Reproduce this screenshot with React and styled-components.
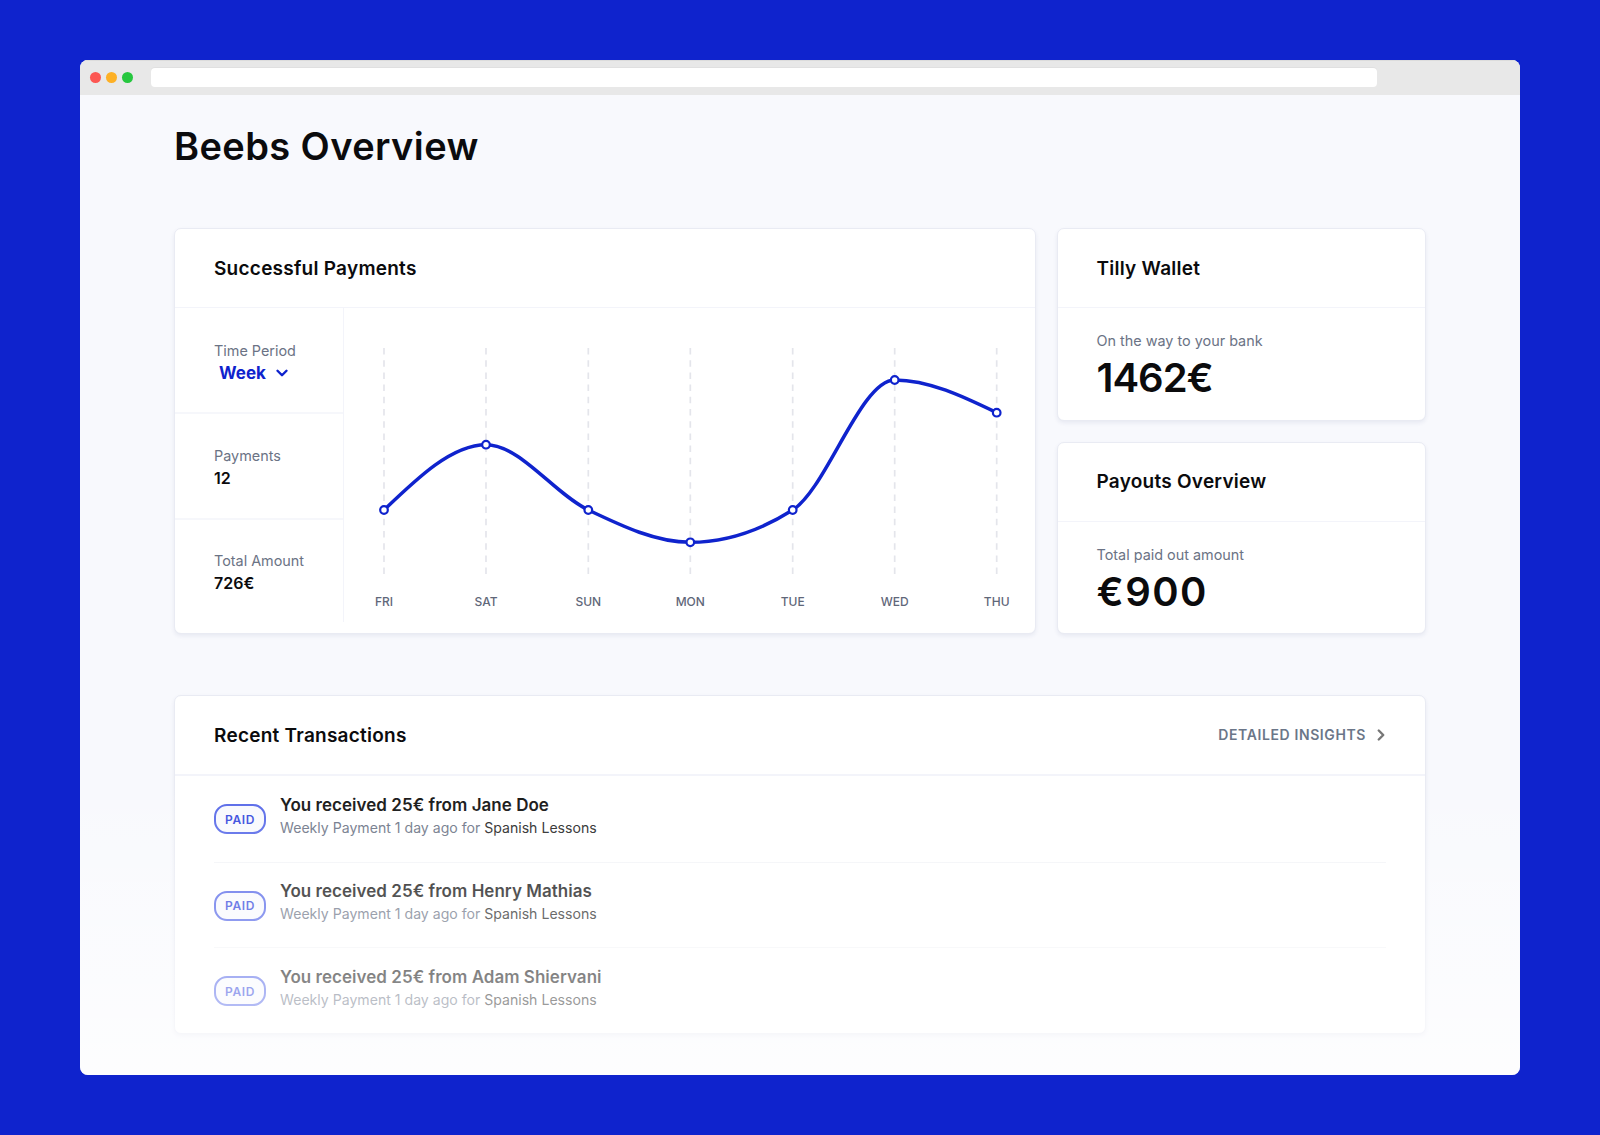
import React from "react";
import styled, { createGlobalStyle } from "styled-components";
import { ChevronDown, ChevronRight } from "lucide-react";

const BLUE = "#0f23cd";
const FONT = `Inter, "Liberation Sans", sans-serif`;

const Global = createGlobalStyle`
  html, body { margin: 0; padding: 0; }
  body { background: ${BLUE}; font-family: ${FONT}; color: #0b0b0d; }
  * { box-sizing: border-box; }
`;

const Page = styled.div`
  width: 1600px;
  height: 1135px;
  padding: 60px 80px;
`;
const Window = styled.div`
  position: relative;
  height: 1015px;
  background: #f8f9fd;
  border-radius: 8px;
  overflow: hidden;
`;
const Fade = styled.div`
  position: absolute;
  inset: 0;
  pointer-events: none;
  background: linear-gradient(to bottom, rgba(255,255,255,0) 0, rgba(255,255,255,0) 720px, rgba(255,255,255,0.72) 1015px);
`;
const Toolbar = styled.div`
  display: flex;
  align-items: center;
  height: 35px;
  padding: 0 0 2px 10px;
  background: #e8e8e8;
  border-top: 1px solid #dcdcdc;
`;
const Dot = styled.span`
  width: 11px;
  height: 11px;
  margin-right: 5px;
  border-radius: 50%;
  background: ${(p) => p.$c};
`;
const Address = styled.div`
  width: 1226px;
  height: 19px;
  margin-left: 13px;
  border-radius: 4px;
  background: #fff;
  box-shadow: 0 -1px 0 #e0e0e0;
`;
const Content = styled.main`
  padding: 26px 94px 0;
`;
const Title = styled.h1`
  margin: 0 0 57px;
  font-size: 38px;
  line-height: 50px;
  font-weight: 600;
  letter-spacing: 0.4px;
`;
const Top = styled.div`
  display: grid;
  grid-template-columns: 862px 369px;
  column-gap: 21px;
  height: 406px;
  margin-bottom: 61px;
`;
const Card = styled.section`
  background: #fff;
  border: 1px solid #e9ebf3;
  border-radius: 7px;
  box-shadow: 0 2px 4px rgba(40, 50, 110, 0.08);
`;
const Stack = styled.div`
  display: flex;
  flex-direction: column;
  gap: 21px;
`;
const SmallCard = styled(Card)`
  flex: 1;
`;
const CardHeader = styled.header`
  display: flex;
  align-items: center;
  justify-content: space-between;
  height: ${(p) => p.$h || 79}px;
  padding: 1px ${(p) => p.$px || 39}px 0;
  border-bottom: ${(p) => p.$bw || 1}px solid #f3f4fa;
`;
const CardTitle = styled.h2`
  margin: 0;
  font-size: 19px;
  line-height: 24px;
  font-weight: 600;
  letter-spacing: 0.25px;
`;
const ChartBody = styled.div`
  display: flex;
  height: 314px;
`;
const Side = styled.div`
  display: flex;
  flex-direction: column;
  width: 169px;
  border-right: 1px solid #f3f4fa;
`;
const SideRow = styled.div`
  height: ${(p) => p.$h}px;
  padding: ${(p) => p.$pad}px 0 0 39px;
  border-top: ${(p) => (p.$first ? "none" : "2px solid #f6f7fb")};
`;
const Label = styled.div`
  font-size: 14.4px;
  line-height: 20px;
  color: #6b7385;
`;
const Value = styled.div`
  font-size: 16px;
  line-height: 24px;
  font-weight: 600;
`;
const Select = styled.div`
  display: flex;
  align-items: center;
  gap: 7px;
  padding-left: 5px;
  font-size: 17px;
  line-height: 24px;
  font-weight: 700;
  color: ${BLUE};
`;
const ChartWrap = styled.div`
  flex: 1;
`;
const Chart = styled.svg`
  display: block;
`;
const Axis = styled.text`
  font-family: ${FONT};
  font-size: 12px;
  font-weight: 500;
  fill: #5f6779;
  text-anchor: middle;
`;
const WalletBody = styled.div`
  padding: 23px 38.5px 0;
`;
const Big = styled.div`
  margin-top: 1px;
  font-size: 40px;
  line-height: 52px;
  font-weight: 600;
  letter-spacing: ${(p) => p.$ls}px;
`;
const Insights = styled.a`
  display: flex;
  align-items: center;
  gap: 6px;
  margin: -2px -4px 0 0;
  font-size: 14px;
  font-weight: 600;
  letter-spacing: 0.6px;
  color: #6b7688;
  svg { color: #777; }
`;
const List = styled.div`
  padding: 0 39px;
`;
const Row = styled.div`
  display: flex;
  align-items: center;
  gap: 14px;
  height: 85.7px;
  border-top: ${(p) => (p.$first ? "none" : "1px solid #f3f4f7")};
`;
const Badge = styled.span`
  display: flex;
  align-items: center;
  justify-content: center;
  width: 52px;
  height: 30px;
  margin-top: 1px;
  border: 2px solid #5567e8;
  border-radius: 13px;
  background: #f8f9fd;
  font-size: 12px;
  font-weight: 600;
  letter-spacing: 0.6px;
  color: #3145dc;
`;
const RowText = styled.div`
  margin-top: -5px;
`;
const RowTitle = styled.div`
  font-size: 17px;
  line-height: 23px;
  font-weight: 600;
  letter-spacing: 0.03px;
  color: #111;
`;
const RowSub = styled.div`
  font-size: 14.1px;
  line-height: 22px;
  color: #6b7385;
  span { color: #222; }
`;

const pts = [
  ["FRI", 40, 202],
  ["SAT", 142, 136.7],
  ["SUN", 244.3, 202],
  ["MON", 346.3, 234.3],
  ["TUE", 448.7, 202],
  ["WED", 550.7, 72],
  ["THU", 652.7, 104.7],
];

function monotonePath(p) {
  const n = p.length;
  const sign = (v) => (v < 0 ? -1 : 1);
  const t = new Array(n).fill(0);
  for (let i = 1; i < n - 1; i++) {
    const h0 = p[i][1] - p[i - 1][1];
    const h1 = p[i + 1][1] - p[i][1];
    const s0 = (p[i][2] - p[i - 1][2]) / h0;
    const s1 = (p[i + 1][2] - p[i][2]) / h1;
    const q = (s0 * h1 + s1 * h0) / (h0 + h1);
    t[i] = (sign(s0) + sign(s1)) * Math.min(Math.abs(s0), Math.abs(s1), 0.5 * Math.abs(q)) || 0;
  }
  const end = (a, b, tan) => (3 * (b[2] - a[2])) / (b[1] - a[1]) / 2 - tan / 2;
  t[0] = end(p[0], p[1], t[1]);
  t[n - 1] = end(p[n - 2], p[n - 1], t[n - 2]);
  let d = `M${p[0][1]},${p[0][2]}`;
  for (let i = 0; i < n - 1; i++) {
    const dx = (p[i + 1][1] - p[i][1]) / 3;
    d += ` C${p[i][1] + dx},${p[i][2] + dx * t[i]} ${p[i + 1][1] - dx},${p[i + 1][2] - dx * t[i + 1]} ${p[i + 1][1]},${p[i + 1][2]}`;
  }
  return d;
}

const transactions = ["Jane Doe", "Henry Mathias", "Adam Shiervani"];

export default function App() {
  return (
    <Page>
      <Global />
      <Window>
        <Toolbar>
          <Dot $c="#fc5753" />
          <Dot $c="#fdb025" />
          <Dot $c="#26c73f" />
          <Address />
        </Toolbar>
        <Content>
          <Title>Beebs Overview</Title>
          <Top>
            <Card>
              <CardHeader>
                <CardTitle>Successful Payments</CardTitle>
              </CardHeader>
              <ChartBody>
                <Side>
                  <SideRow $first $h={104} $pad={33}>
                    <Label>Time Period</Label>
                    <Select>
                      Week
                      <ChevronDown size={18} strokeWidth={3.2} />
                    </Select>
                  </SideRow>
                  <SideRow $h={105.5} $pad={31.5}>
                    <Label>Payments</Label>
                    <Value>12</Value>
                  </SideRow>
                  <SideRow $h={104.5} $pad={31.5}>
                    <Label>Total Amount</Label>
                    <Value>726€</Value>
                  </SideRow>
                </Side>
                <ChartWrap>
                  <Chart width="691" height="314" viewBox="0 0 691 314">
                    {pts.map(([d, x]) => (
                      <line key={d} x1={x} x2={x} y1="40" y2="267" stroke="#e4e5eb" strokeWidth="1.7" strokeDasharray="6.5 5.7" />
                    ))}
                    <path d={monotonePath(pts)} fill="none" stroke={BLUE} strokeWidth="3.5" />
                    {pts.map(([d, x, y]) => (
                      <circle key={d} cx={x} cy={y} r="3.8" fill="#fff" stroke={BLUE} strokeWidth="2.2" />
                    ))}
                    {pts.map(([d, x]) => (
                      <Axis key={d} x={x} y="298">{d}</Axis>
                    ))}
                  </Chart>
                </ChartWrap>
              </ChartBody>
            </Card>
            <Stack>
              <SmallCard>
                <CardHeader $px={38.5}>
                  <CardTitle>Tilly Wallet</CardTitle>
                </CardHeader>
                <WalletBody>
                  <Label>On the way to your bank</Label>
                  <Big $ls={-1}>1462€</Big>
                </WalletBody>
              </SmallCard>
              <SmallCard>
                <CardHeader $px={38.5}>
                  <CardTitle>Payouts Overview</CardTitle>
                </CardHeader>
                <WalletBody>
                  <Label>Total paid out amount</Label>
                  <Big $ls={1.5}>€900</Big>
                </WalletBody>
              </SmallCard>
            </Stack>
          </Top>
          <Card>
            <CardHeader $h={80} $bw={2}>
              <CardTitle>Recent Transactions</CardTitle>
              <Insights>
                DETAILED INSIGHTS
                <ChevronRight size={18} strokeWidth={3.2} />
              </Insights>
            </CardHeader>
            <List>
              {transactions.map((name, i) => (
                <Row key={name} $first={i === 0}>
                  <Badge>PAID</Badge>
                  <RowText>
                    <RowTitle>You received 25€ from {name}</RowTitle>
                    <RowSub>
                      Weekly Payment 1 day ago for <span>Spanish Lessons</span>
                    </RowSub>
                  </RowText>
                </Row>
              ))}
            </List>
          </Card>
        </Content>
        <Fade />
      </Window>
    </Page>
  );
}
